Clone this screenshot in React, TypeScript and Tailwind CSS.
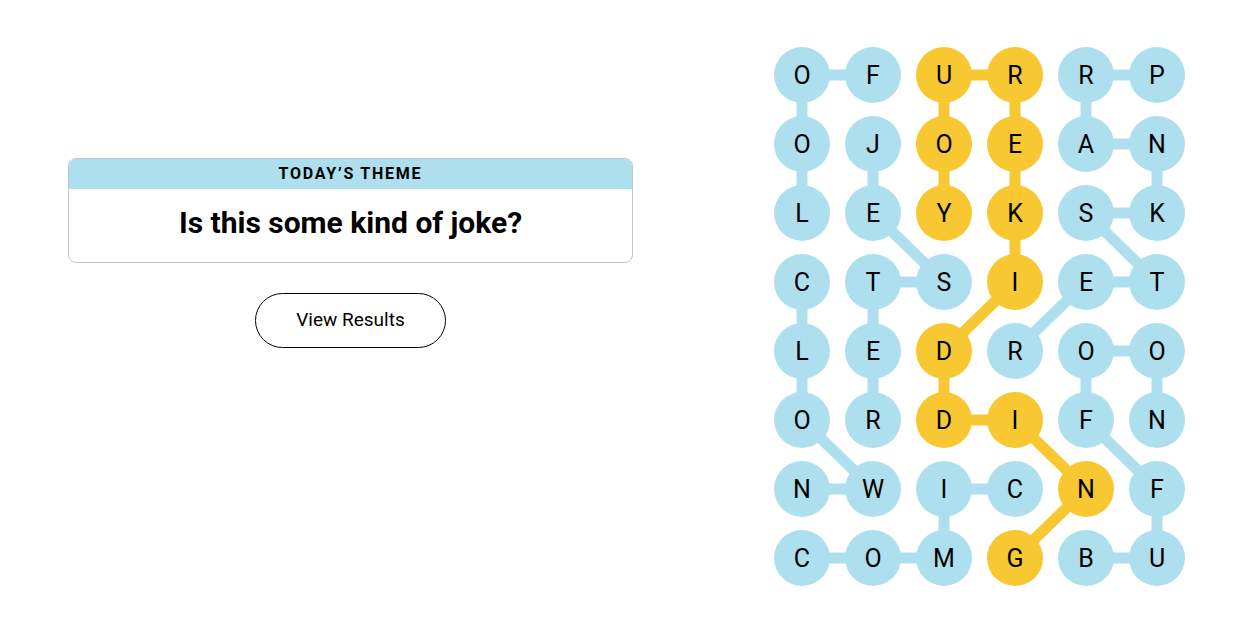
const BLUE = "#aedfee";
const YELLOW = "#f7c832";

const letters = [
  "OFURRP",
  "OJOEAN",
  "LEYKSK",
  "CTSIET",
  "LEDROO",
  "ORDIFN",
  "NWICNF",
  "COMGBU",
];

// cells that belong to the spangram
const spangram = new Set([
  "0,2", "0,3", "1,2", "1,3", "2,2", "2,3", "3,3", "4,2", "5,2", "5,3", "6,4", "7,3",
]);

type Edge = [number, number, number, number, boolean];

const edges: Edge[] = [
  // blue words
  [0, 0, 0, 1, false],
  [0, 0, 1, 0, false],
  [1, 0, 2, 0, false],
  [1, 1, 2, 1, false],
  [2, 1, 3, 2, false],
  [3, 1, 3, 2, false],
  [3, 1, 4, 1, false],
  [4, 1, 5, 1, false],
  [3, 0, 4, 0, false],
  [4, 0, 5, 0, false],
  [5, 0, 6, 1, false],
  [6, 0, 6, 1, false],
  [7, 0, 7, 1, false],
  [7, 1, 7, 2, false],
  [7, 2, 6, 2, false],
  [6, 2, 6, 3, false],
  [0, 4, 0, 5, false],
  [0, 4, 1, 4, false],
  [1, 4, 1, 5, false],
  [1, 5, 2, 5, false],
  [2, 4, 2, 5, false],
  [2, 4, 3, 5, false],
  [3, 4, 3, 5, false],
  [3, 4, 4, 3, false],
  [4, 4, 4, 5, false],
  [4, 4, 5, 4, false],
  [4, 5, 5, 5, false],
  [5, 4, 6, 5, false],
  [6, 5, 7, 5, false],
  [7, 4, 7, 5, false],
  // spangram
  [0, 2, 0, 3, true],
  [0, 2, 1, 2, true],
  [1, 2, 2, 2, true],
  [0, 3, 1, 3, true],
  [1, 3, 2, 3, true],
  [2, 3, 3, 3, true],
  [3, 3, 4, 2, true],
  [4, 2, 5, 2, true],
  [5, 2, 5, 3, true],
  [5, 3, 6, 4, true],
  [6, 4, 7, 3, true],
];

const CELL = 56;
const PITCH_X = 71;
const PITCH_Y = 69;

function center(r: number, c: number) {
  return { x: c * PITCH_X + CELL / 2, y: r * PITCH_Y + CELL / 2 };
}

function Board() {
  return (
    <div className="relative w-[411px] h-[539px]">
      <svg className="absolute inset-0" width={411} height={539}>
        {edges.map(([r1, c1, r2, c2, span], i) => {
          const a = center(r1, c1);
          const b = center(r2, c2);
          return (
            <line
              key={i}
              x1={a.x}
              y1={a.y}
              x2={b.x}
              y2={b.y}
              stroke={span ? YELLOW : BLUE}
              strokeWidth={11}
            />
          );
        })}
      </svg>
      <div className="relative grid grid-cols-[repeat(6,56px)] grid-rows-[repeat(8,56px)] gap-x-[15px] gap-y-[13px]">
        {letters.map((row, r) =>
          row.split("").map((ch, c) => (
            <button
              key={`${r}-${c}`}
              className={`w-[56px] h-[56px] rounded-full flex items-center justify-center text-[25px] font-normal text-black leading-none ${
                spangram.has(`${r},${c}`) ? "bg-[#f7c832]" : "bg-[#aedfee]"
              }`}
            >
              {ch}
            </button>
          ))
        )}
      </div>
    </div>
  );
}

export default function App() {
  return (
    <div className="w-full h-[634px] bg-white flex font-['Roboto','Liberation_Sans',sans-serif]">
      <div className="w-[565px] ml-[68px] mt-[158px] flex flex-col items-center">
        <div className="w-full border border-[#c4c4c4] rounded-lg overflow-hidden">
          <div className="h-[30px] bg-[#aedfee] flex items-center justify-center text-[16px] font-bold tracking-[0.11em] text-black">
            TODAY’S THEME
          </div>
          <div className="h-[73px] pb-[6px] flex items-center justify-center text-[30px] font-bold text-black">
            Is this some kind of joke?
          </div>
        </div>
        <button className="mt-[30px] w-[191px] h-[55px] rounded-full border border-black text-[19px] text-black">
          View Results
        </button>
      </div>
      <div className="ml-auto mr-[65px] mt-[47px]">
        <Board />
      </div>
    </div>
  );
}
